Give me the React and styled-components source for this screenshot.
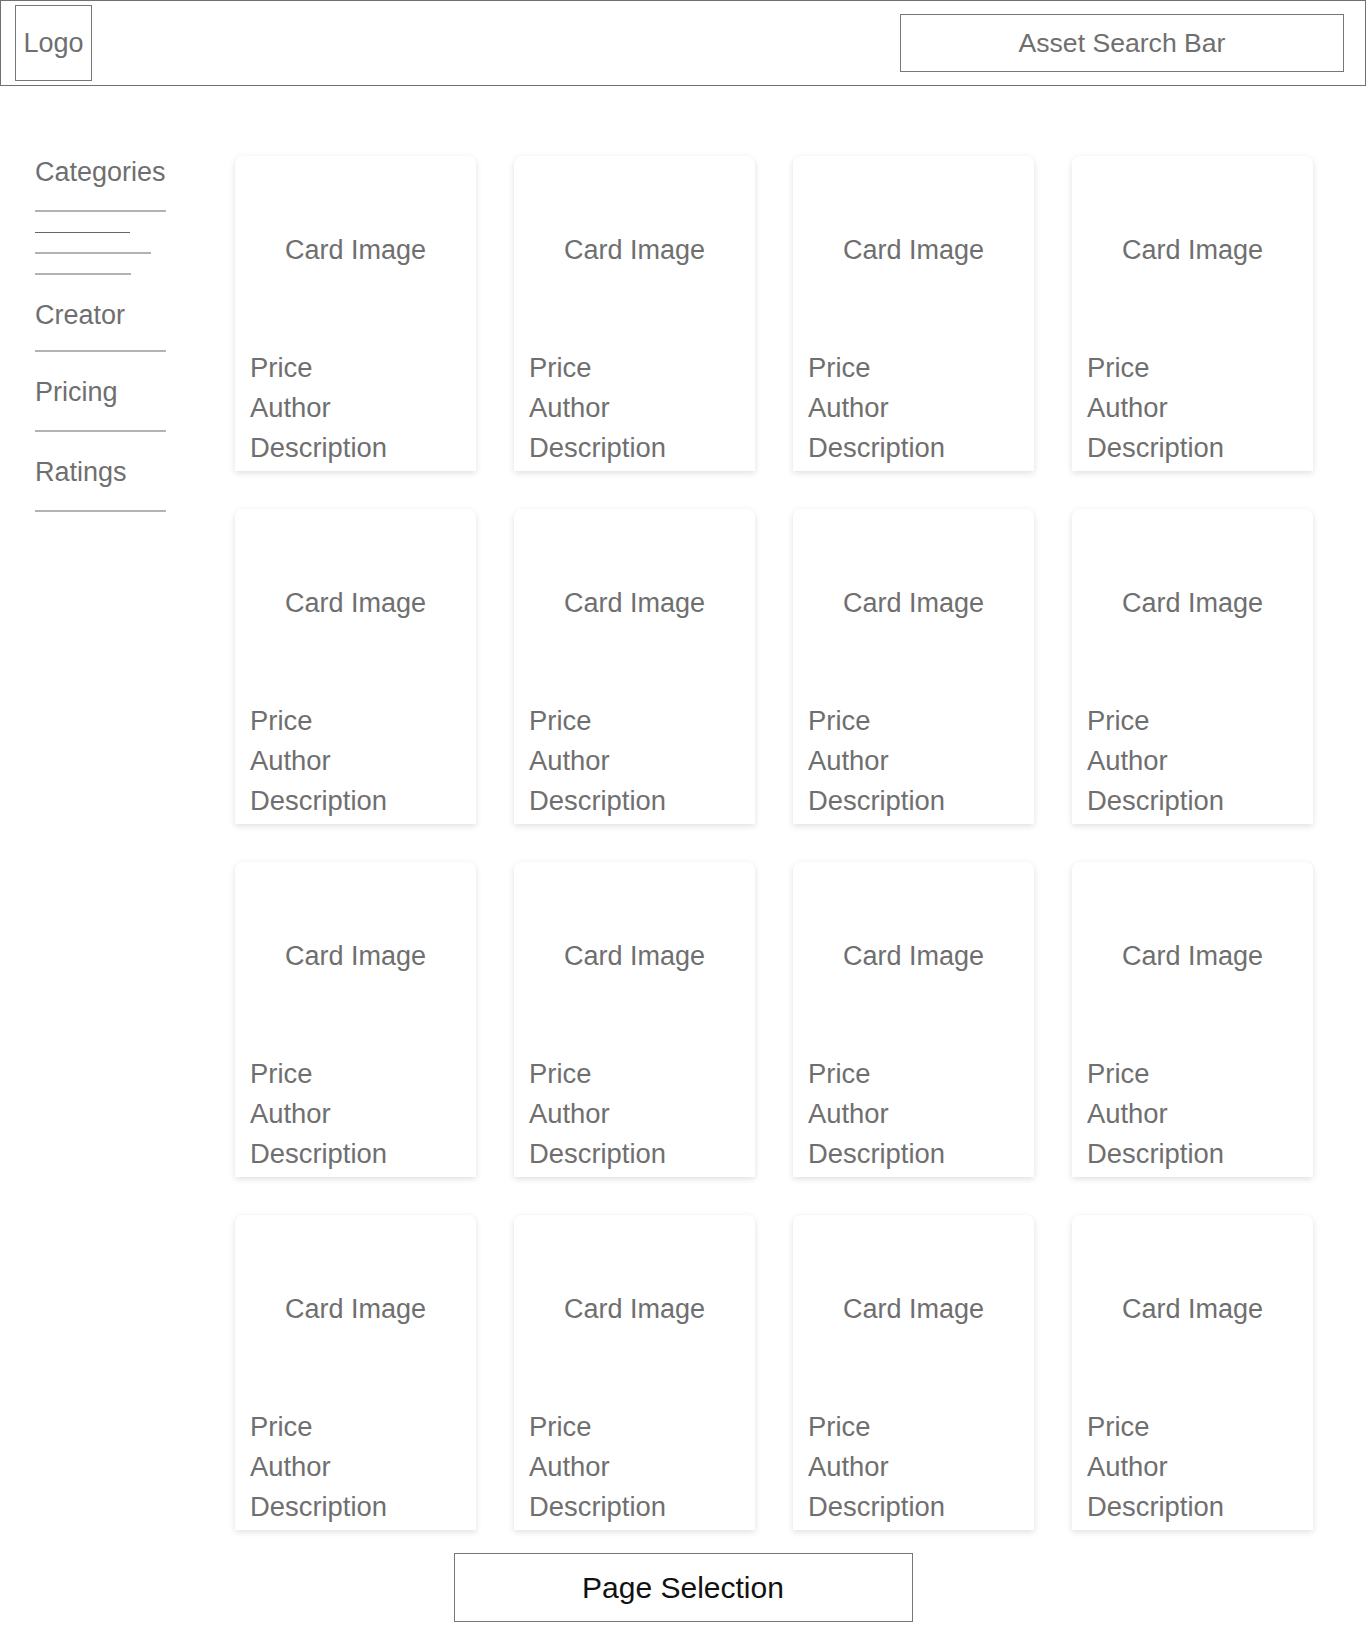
import styled, { createGlobalStyle } from 'styled-components'

const GlobalStyle = createGlobalStyle`
    body{
        margin:0;
        background:#fff;
        font-family:"Liberation Sans", Arial, Helvetica, sans-serif;
    }
`

const filters = [
    { label: 'Creator', pad: 19 },
    { label: 'Pricing', pad: 22 },
    { label: 'Ratings', pad: 22 },
]

const subLines = [
    { w: 95, dark: true },
    { w: 116 },
    { w: 96 },
]

export default function App(){
    const cards = Array.from({ length: 16 }, (_, i) => i)

    return (
        <>
            <GlobalStyle />
            <Header>
                <Logo>Logo</Logo>
                <SearchBar>Asset Search Bar</SearchBar>
            </Header>

            <Main>
                <Sidebar>
                    <FilterLabel $pad={22}>Categories</FilterLabel>
                    <SubLines>
                        {subLines.map((l, i) => (
                            <SubLine key={i} $w={l.w} $dark={l.dark} />
                        ))}
                    </SubLines>
                    {filters.map(f => (
                        <Filter key={f.label}>
                            <FilterLabel $pad={f.pad}>{f.label}</FilterLabel>
                        </Filter>
                    ))}
                </Sidebar>

                <Grid>
                    {cards.map(i => (
                        <Card key={i}>
                            <CardImage>Card Image</CardImage>
                            <CardInfo>
                                <p>Price</p>
                                <p>Author</p>
                                <p>Description</p>
                            </CardInfo>
                        </Card>
                    ))}
                </Grid>
            </Main>

            <Footer>
                <PageSelection>Page Selection</PageSelection>
            </Footer>
        </>
    )
}

const Header = styled.header`
    height:86px;
    box-sizing:border-box;
    border:1px solid #707070;
    display:flex;
    align-items:center;
    justify-content:space-between;
    padding:0 21px 0 14px;
`

const Logo = styled.div`
    width:77px;
    height:76px;
    box-sizing:border-box;
    border:1px solid #777;
    display:flex;
    align-items:center;
    justify-content:center;
    font-size:27px;
    color:#6f6f6f;
`

const SearchBar = styled.div`
    width:444px;
    height:58px;
    box-sizing:border-box;
    border:1px solid #777;
    display:flex;
    align-items:center;
    justify-content:center;
    font-size:26.6px;
    color:#6f6f6f;
`

const Main = styled.main`
    display:flex;
    padding:70px 0 0 35px;
`

const Sidebar = styled.aside`
    width:200px;
    flex-shrink:0;
    display:flex;
    flex-direction:column;
    align-items:flex-start;
`

const Filter = styled.div`
    margin-top:24px;
`

const FilterLabel = styled.div`
    width:131px;
    font-size:27px;
    line-height:32px;
    color:#6f6f6f;
    padding-bottom:${p => p.$pad}px;
    border-bottom:2px solid #b3b3b3;
`

const SubLines = styled.div`
    display:flex;
    flex-direction:column;
    gap:19px;
    padding-top:20px;
`

const SubLine = styled.span`
    display:block;
    width:${p => p.$w}px;
    height:${p => p.$dark ? 1 : 2}px;
    background:${p => p.$dark ? '#666' : '#b3b3b3'};
`

const Grid = styled.section`
    display:grid;
    grid-template-columns:repeat(4, 241px);
    grid-auto-rows:315px;
    gap:38px;
`

const Card = styled.article`
    display:flex;
    flex-direction:column;
    background:#fff;
    border-radius:8px 8px 0 0;
    box-shadow:0 2px 6px rgba(0,0,0,0.13);
`

const CardImage = styled.div`
    flex:1;
    display:flex;
    align-items:center;
    justify-content:center;
    padding-bottom:5px;
    font-size:27px;
    line-height:32px;
    color:#6f6f6f;
`

const CardInfo = styled.div`
    padding:0 15px 3px;

    p{
        margin:0;
        font-size:27.4px;
        line-height:40px;
        color:#6f6f6f;
    }
`

const Footer = styled.footer`
    display:flex;
    justify-content:center;
    padding:23px 0 16px;
`

const PageSelection = styled.div`
    width:459px;
    height:69px;
    box-sizing:border-box;
    border:1px solid #777;
    display:flex;
    align-items:center;
    justify-content:center;
    font-size:30px;
    color:#111;
`
